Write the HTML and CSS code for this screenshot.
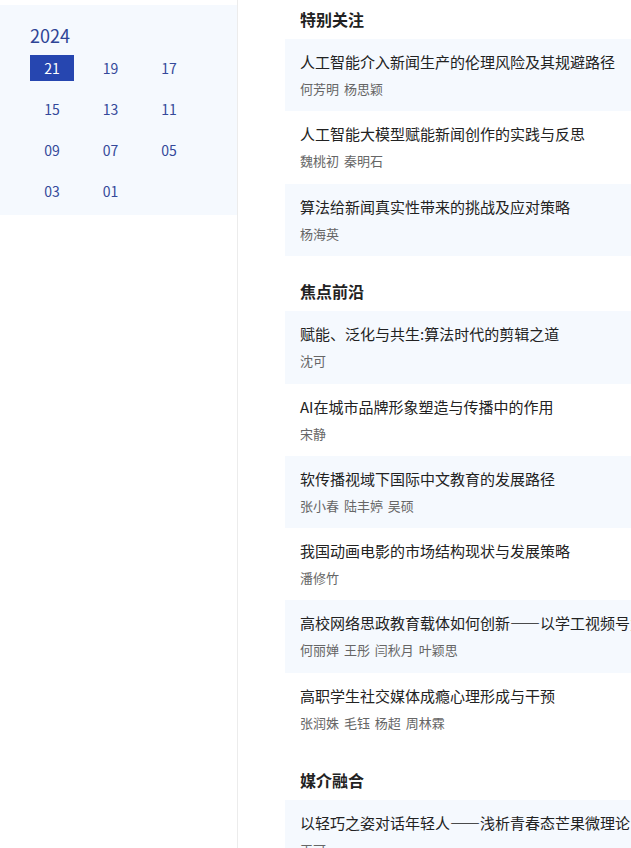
FILE: index.html
```html
<!DOCTYPE html>
<html lang="zh-CN">

<head>
    <meta charset="UTF-8">
    <meta name="viewport" content="width=device-width, initial-scale=1.0">
    <title>期刊目录</title>
    <link rel="stylesheet" href="styles.css">
</head>

<body>

    <div class="page">

        <aside class="sidebar">
            <div class="issues">
                <div class="year">2024</div>
                <div class="issue-grid">
                    <a class="issue active">21</a>
                    <a class="issue">19</a>
                    <a class="issue">17</a>
                    <a class="issue">15</a>
                    <a class="issue">13</a>
                    <a class="issue">11</a>
                    <a class="issue">09</a>
                    <a class="issue">07</a>
                    <a class="issue">05</a>
                    <a class="issue">03</a>
                    <a class="issue">01</a>
                </div>
            </div>
        </aside>

        <main class="main">

            <section class="column">
                <h2 class="column-title">特别关注</h2>
                <div class="article">
                    <div class="article-title">人工智能介入新闻生产的伦理风险及其规避路径</div>
                    <div class="article-author">何芳明 杨思颖</div>
                </div>
                <div class="article">
                    <div class="article-title">人工智能大模型赋能新闻创作的实践与反思</div>
                    <div class="article-author">魏桃初 秦明石</div>
                </div>
                <div class="article">
                    <div class="article-title">算法给新闻真实性带来的挑战及应对策略</div>
                    <div class="article-author">杨海英</div>
                </div>
            </section>

            <section class="column">
                <h2 class="column-title">焦点前沿</h2>
                <div class="article">
                    <div class="article-title">赋能、泛化与共生:算法时代的剪辑之道</div>
                    <div class="article-author">沈可</div>
                </div>
                <div class="article">
                    <div class="article-title">AI在城市品牌形象塑造与传播中的作用</div>
                    <div class="article-author">宋静</div>
                </div>
                <div class="article">
                    <div class="article-title">软传播视域下国际中文教育的发展路径</div>
                    <div class="article-author">张小春 陆丰婷 吴硕</div>
                </div>
                <div class="article">
                    <div class="article-title">我国动画电影的市场结构现状与发展策略</div>
                    <div class="article-author">潘修竹</div>
                </div>
                <div class="article">
                    <div class="article-title">高校网络思政教育载体如何创新——以学工视频号为例</div>
                    <div class="article-author">何丽婵 王彤 闫秋月 叶颖思</div>
                </div>
                <div class="article">
                    <div class="article-title">高职学生社交媒体成瘾心理形成与干预</div>
                    <div class="article-author">张润姝 毛钰 杨超 周林霖</div>
                </div>
            </section>

            <section class="column">
                <h2 class="column-title">媒介融合</h2>
                <div class="article">
                    <div class="article-title">以轻巧之姿对话年轻人——浅析青春态芒果微理论</div>
                    <div class="article-author">王可</div>
                </div>
            </section>

        </main>

    </div>

</body>

</html>
```

FILE: styles.css
```css
* {
    box-sizing: border-box;
}

body {
    margin: 0;
    font-family: "Noto Sans CJK SC", "Noto Sans", sans-serif;
    color: #222;
    background: #fff;
    overflow: hidden;
}

.page {
    display: flex;
    min-height: 100vh;
}

.sidebar {
    width: 238px;
    flex-shrink: 0;
    border-right: 1px solid #ececec;
    padding-top: 5px;
}

.issues {
    background: #f5f9fe;
    padding: 18px 0 11px 30px;
}

.year {
    font-size: 18px;
    line-height: 24px;
    color: #2f4596;
    margin-bottom: 8px;
}

.issue-grid {
    display: grid;
    grid-template-columns: repeat(3, 44px);
    grid-auto-rows: 26px;
    column-gap: 14.5px;
    row-gap: 15px;
}

.issue {
    display: flex;
    align-items: center;
    justify-content: center;
    font-size: 14px;
    color: #34499a;
    cursor: pointer;
}

.issue.active {
    background: #2646b0;
    color: #fff;
}

.main {
    flex: 1;
    padding-left: 47px;
}

.column {
    margin-bottom: 16.5px;
}

.column-title {
    margin: 0;
    height: 39px;
    line-height: 39px;
    padding-left: 15px;
    font-size: 16px;
    font-weight: bold;
    color: #222;
}

.article {
    height: 72.25px;
    padding: 13px 0 0 15px;
    white-space: nowrap;
    overflow: hidden;
}

.article:nth-of-type(odd) {
    background: #f5f9fe;
}

.article-title {
    font-size: 15px;
    line-height: 20px;
    color: #222;
}

.article-author {
    margin-top: 8px;
    font-size: 13px;
    line-height: 18px;
    color: #666;
    word-spacing: 2px;
}
```
